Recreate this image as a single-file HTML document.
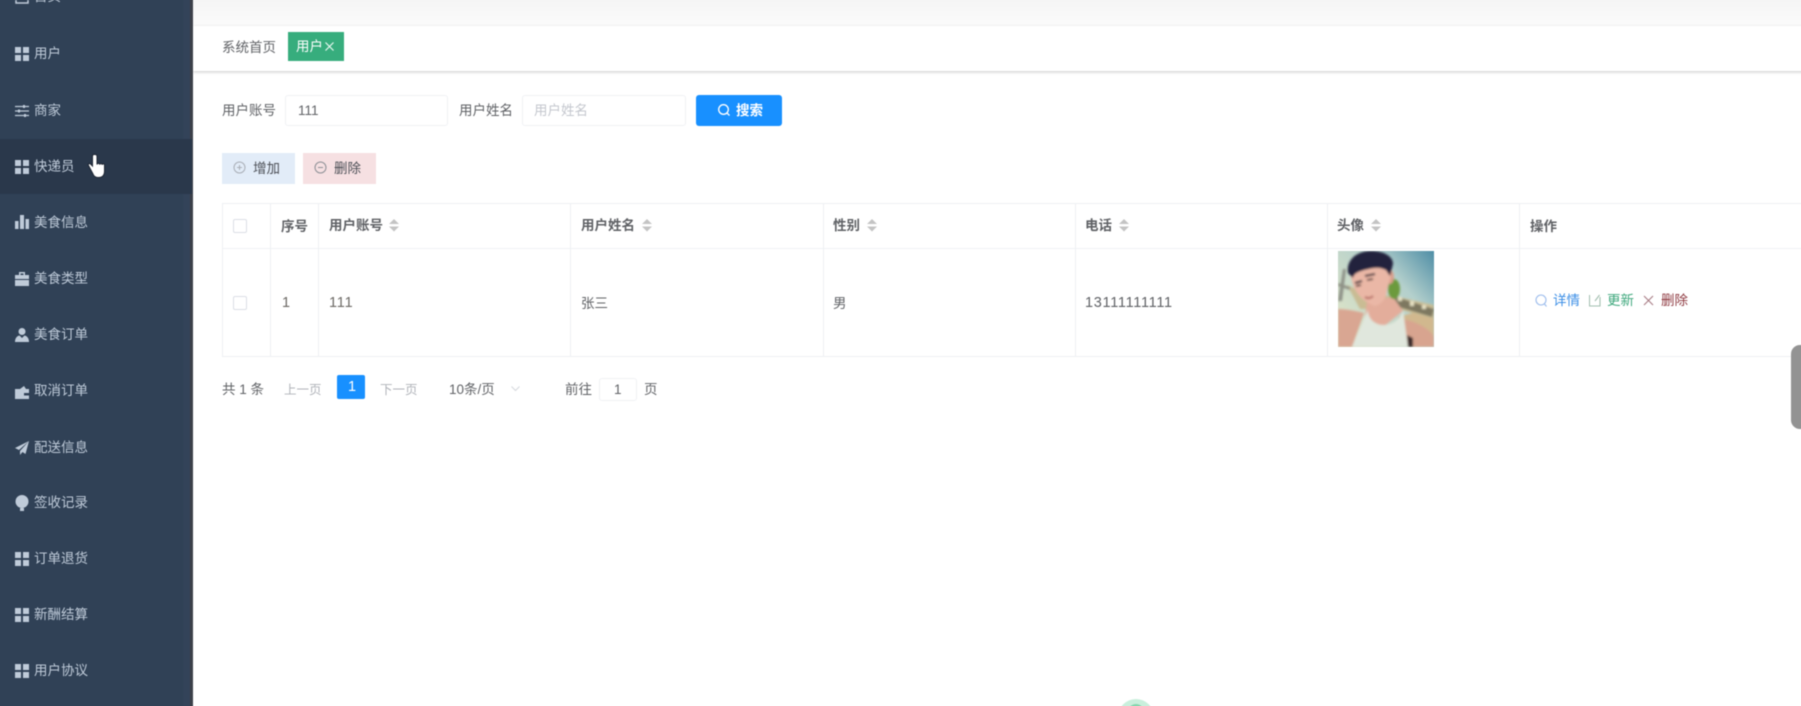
<!DOCTYPE html>
<html lang="zh"><head><meta charset="utf-8"><title>用户</title>
<style>
html,body{margin:0;padding:0;background:#fff}
#p{position:relative;width:1801px;height:706px;overflow:hidden;background:#fff}
#q{position:absolute;left:0;top:0;width:1801px;height:706px;font-family:"Liberation Sans","Noto Sans CJK SC",sans-serif;font-size:13.5px;color:#606266;filter:blur(.55px)}
#q div,#q span.a,#q svg.a{position:absolute}
.t{position:absolute;white-space:nowrap;line-height:20px;height:20px}
.m{color:#bfcbd9;left:34px}
.h{font-weight:700;color:#5f6165}
.i{position:absolute;left:15px;width:14px;height:14px}
.vl{position:absolute;width:1px;background:#eef0f3;top:203px;height:153px}
.cb{position:absolute;width:12px;height:12px;border:1px solid #dcdfe6;left:233px;background:#fff;border-radius:2px}
</style></head><body><div id="p"><div id="q">
<!-- top -->
<div style="left:193px;top:-5px;width:1618px;height:31px;background:linear-gradient(#f4f4f4,#fbfbfb)"></div>
<div style="left:193px;top:26px;width:1618px;height:45px;background:#fff;box-shadow:0 1px 3px rgba(0,0,0,.22)"></div>
<span class="t" style="left:222px;top:38px">系统首页</span>
<div style="left:288px;top:32px;width:56px;height:29px;background:#37ad7d"></div>
<span class="t" style="left:296px;top:37px;color:#fff">用户</span>
<svg class="a" style="left:324px;top:41px" width="11" height="11" viewBox="0 0 11 11"><path d="M1.500 1.500l8 8M9.500 1.500l-8 8" stroke="#e8f8f0" stroke-width="1.200" fill="none"/></svg>

<!-- sidebar -->
<div style="left:-6px;top:-6px;width:198px;height:718px;background:#304156"></div>
<div style="left:183px;top:-6px;width:7px;height:718px;background:#334359"></div>
<div style="left:190px;top:-6px;width:3px;height:718px;background:#3c4049"></div>
<div style="left:-6px;top:139px;width:198px;height:55px;background:#2a384b"></div>

<svg class="a" style="left:15px;top:0" width="14" height="4" viewBox="0 0 14 4"><path d="M1 0v3h12V0" stroke="#bfcbd9" stroke-width="1.500" fill="none"/></svg>
<span class="t m" style="top:-13px">首页</span>

<svg class="i" style="top:47px" viewBox="0 0 14 14"><path fill="#bfcbd9" d="M0 0h6v6H0zM8 0h6v6H8zM0 8h6v6H0zM8 8h6v6H8z"/></svg>
<span class="t m" style="top:44px">用户</span>

<svg class="i" style="top:104px" viewBox="0 0 14 14"><path stroke="#bfcbd9" stroke-width="1.300" fill="none" d="M0 2.500h14M0 7h14M0 11.500h14"/><path fill="#bfcbd9" d="M8 1h2v3H8zM3 5.500h2v3H3zM9 10h2v3H9z"/></svg>
<span class="t m" style="top:101px">商家</span>

<svg class="i" style="top:160px" viewBox="0 0 14 14"><path fill="#bfcbd9" d="M0 0h6v6H0zM8 0h6v6H8zM0 8h6v6H0zM8 8h6v6H8z"/></svg>
<span class="t m" style="top:157px">快递员</span>

<svg class="i" style="top:215px" viewBox="0 0 14 14"><path fill="#bfcbd9" d="M0 6h3.500v8H0zM5 0h4v14H5zM10.500 4H14v10h-3.500z"/></svg>
<span class="t m" style="top:213px">美食信息</span>

<svg class="i" style="top:272px" viewBox="0 0 14 14"><path fill="#bfcbd9" d="M4 0h6v3h4v4H0V3h4zM5.500 1.500V3h3V1.500zM0 8h14v6H0z"/></svg>
<span class="t m" style="top:269px">美食类型</span>

<svg class="i" style="top:328px" viewBox="0 0 14 14"><circle cx="7" cy="3.500" r="3.500" fill="#bfcbd9"/><path fill="#bfcbd9" d="M0 14c0-4 2-6 4.500-6.500L7 10l2.500-2.500C12 8 14 10 14 14z"/></svg>
<span class="t m" style="top:325px">美食订单</span>

<svg class="i" style="top:385px" viewBox="0 0 14 14"><path fill="#bfcbd9" d="M0 4h5l4-3 2 3h3v10H0zM9 8v2.500h5V8z"/></svg>
<span class="t m" style="top:381px">取消订单</span>

<svg class="i" style="top:441px" viewBox="0 0 14 14"><path fill="#bfcbd9" d="M14 0L0 7l4 2zM14 0L5 10v4l2.500-3 3 2z"/></svg>
<span class="t m" style="top:438px">配送信息</span>

<svg class="i" style="top:495px;height:16px" viewBox="0 0 14 16"><circle cx="7" cy="6.500" r="6.500" fill="#bfcbd9"/><path fill="#bfcbd9" d="M5 13h4v3H5z"/></svg>
<span class="t m" style="top:493px">签收记录</span>

<svg class="i" style="top:552px" viewBox="0 0 14 14"><path fill="#bfcbd9" d="M0 0h6v6H0zM8 0h6v6H8zM0 8h6v6H0zM8 8h6v6H8z"/></svg>
<span class="t m" style="top:549px">订单退货</span>

<svg class="i" style="top:608px" viewBox="0 0 14 14"><path fill="#bfcbd9" d="M0 0h6v6H0zM8 0h6v6H8zM0 8h6v6H0zM8 8h6v6H8z"/></svg>
<span class="t m" style="top:605px">新酬结算</span>

<svg class="i" style="top:664px" viewBox="0 0 14 14"><path fill="#bfcbd9" d="M0 0h6v6H0zM8 0h6v6H8zM0 8h6v6H0zM8 8h6v6H8z"/></svg>
<span class="t m" style="top:661px">用户协议</span>

<!-- cursor -->
<svg class="a" style="left:87px;top:153px" width="19" height="26" viewBox="0 0 19 26"><path d="M7 1.500c-1.200 0-1.500 1-1.500 2v9.500L3.500 11C2 10 .8 11 1.500 12.500L6 21c1 2.500 2.500 3.500 5.500 3.500 4 0 6-2.500 6-6.500v-6c0-1.500-2-1.500-2.300-.2 0-1.500-2.200-1.700-2.500-.2 0-1.500-2.300-1.700-2.700-.1V3.500c0-1-.7-2-1.800-2h-.7z" fill="#fff" stroke="#1c2431" stroke-width="1"/></svg>

<!-- search -->
<span class="t" style="left:222px;top:101px">用户账号</span>
<div style="left:285px;top:95px;width:161px;height:29px;border:1px solid #f0f1f4;border-radius:3px"></div>
<span class="t" style="left:298px;top:101px">111</span>
<span class="t" style="left:459px;top:101px">用户姓名</span>
<div style="left:522px;top:95px;width:162px;height:29px;border:1px solid #f0f1f4;border-radius:3px"></div>
<span class="t" style="left:534px;top:101px;color:#c4c7ce">用户姓名</span>
<div style="left:696px;top:95px;width:86px;height:31px;background:#1890ff;border-radius:3px"></div>
<svg class="a" style="left:717px;top:103px" width="14" height="14" viewBox="0 0 14 14"><circle cx="6.500" cy="6.500" r="4.800" stroke="#fff" stroke-width="1.300" fill="none"/><path d="M10 10l2.500 2.500" stroke="#fff" stroke-width="1.300"/></svg>
<span class="t" style="left:736px;top:101px;color:#fff;font-weight:700">搜索</span>

<!-- buttons -->
<div style="left:222px;top:153px;width:73px;height:31px;background:#e2ecf8"></div>
<svg class="a" style="left:233px;top:161px" width="13" height="13" viewBox="0 0 13 13"><circle cx="6.500" cy="6.500" r="5.500" stroke="#a9aeb6" fill="none"/><path d="M6.500 4v5M4 6.500h5" stroke="#a9aeb6"/></svg>
<span class="t" style="left:253px;top:159px;color:#4d5057">增加</span>
<div style="left:303px;top:153px;width:73px;height:31px;background:#f6e0e2"></div>
<svg class="a" style="left:314px;top:161px" width="13" height="13" viewBox="0 0 13 13"><circle cx="6.500" cy="6.500" r="5.500" stroke="#8c8f95" fill="none"/><path d="M4 6.500h5" stroke="#8c8f95"/></svg>
<span class="t" style="left:334px;top:159px;color:#4d5057">删除</span>

<!-- table -->
<div style="left:222px;top:203px;width:1589px;height:1px;background:#eef0f3"></div>
<div style="left:222px;top:248px;width:1589px;height:1px;background:#f0f2f5"></div>
<div style="left:222px;top:356px;width:1589px;height:1px;background:#eef0f3"></div>
<div class="vl" style="left:222px"></div><div class="vl" style="left:270px"></div><div class="vl" style="left:318px"></div><div class="vl" style="left:570px"></div><div class="vl" style="left:823px"></div><div class="vl" style="left:1075px"></div><div class="vl" style="left:1327px"></div><div class="vl" style="left:1519px"></div>
<div class="cb" style="top:219px"></div><div class="cb" style="top:296px"></div>
<span class="t h" style="left:281px;top:217px">序号</span>
<span class="t h" style="left:329px;top:215.500px">用户账号</span>
<span class="t h" style="left:581px;top:215.500px">用户姓名</span>
<span class="t h" style="left:833px;top:215.500px">性别</span>
<span class="t h" style="left:1085px;top:215.500px">电话</span>
<span class="t h" style="left:1337px;top:215.500px">头像</span>
<span class="t h" style="left:1530px;top:217px">操作</span>
<svg class="a" style="left:389px;top:219px" width="10" height="13" viewBox="0 0 10 13"><path d="M5 0l5 5H0zM0 7.500h10L5 12.500z" fill="#c4c4c4"/></svg>
<svg class="a" style="left:642px;top:219px" width="10" height="13" viewBox="0 0 10 13"><path d="M5 0l5 5H0zM0 7.500h10L5 12.500z" fill="#c4c4c4"/></svg>
<svg class="a" style="left:867px;top:219px" width="10" height="13" viewBox="0 0 10 13"><path d="M5 0l5 5H0zM0 7.500h10L5 12.500z" fill="#c4c4c4"/></svg>
<svg class="a" style="left:1119px;top:219px" width="10" height="13" viewBox="0 0 10 13"><path d="M5 0l5 5H0zM0 7.500h10L5 12.500z" fill="#c4c4c4"/></svg>
<svg class="a" style="left:1371px;top:219px" width="10" height="13" viewBox="0 0 10 13"><path d="M5 0l5 5H0zM0 7.500h10L5 12.500z" fill="#c4c4c4"/></svg>

<span class="t" style="left:282px;top:293px;letter-spacing:1px;color:#6d6a66;font-size:14.500px">1</span>
<span class="t" style="left:329px;top:293px;letter-spacing:.8px;color:#6d6a66;font-size:14.500px">111</span>
<span class="t" style="left:581px;top:294px">张三</span>
<span class="t" style="left:833px;top:294px">男</span>
<span class="t" style="left:1085px;top:293px;letter-spacing:.7px;font-size:14.500px">13111111111</span>

<!-- avatar -->
<svg class="a" style="left:1338px;top:251px" width="96" height="96" viewBox="0 0 96 96">
<defs><linearGradient id="s" x1="1" y1="0" x2=".1" y2=".8"><stop offset="0" stop-color="#4f8ea6"/><stop offset=".4" stop-color="#b4d0cc"/><stop offset="1" stop-color="#dbe3c8"/></linearGradient><filter id="b"><feGaussianBlur stdDeviation="1"/></filter></defs>
<rect width="96" height="96" fill="url(#s)"/>
<g filter="url(#b)">
<path d="M60 66l36-10v40H70z" fill="#d1b88e"/>
<path d="M9 34l18 8 33 4 36 8v14L60 58 22 58z" fill="#c9bc94"/>
<path d="M52 44l44 14-2 8-40-12z" fill="#7e7860"/>
<path d="M60 46h4v4h-4zM72 50h4v5h-4zM84 54h4v4h-4z" fill="#e8e2c4"/>
<path d="M5 18h3L4 50H0z" fill="#8d9187"/>
<path d="M0 32l12 4v3L0 35z" fill="#8f9185"/>
<path d="M0 58c8 0 18 2 26 4L14 96H0z" fill="#d9a692"/>
<path d="M64 68c14 2 28 10 32 18v10H66z" fill="#d8a48f"/>
<path d="M29 50l26-4 10 14-20 16-18-10z" fill="#e3ad9b"/>
<path d="M30 59c0 8 6 15 15 15 10 0 18-6 20-15l5 37H14z" fill="#e0e7dd"/>
<ellipse cx="56" cy="38" rx="6" ry="10" fill="#6c9a3c"/>
<ellipse cx="52" cy="26" rx="4" ry="7" fill="#d99f8b"/>
<path d="M12 20c2 14 6 28 25 35 8-2 12-10 12-16l4-14-6-12-20-2z" fill="#eab7a6"/>
<path d="M10 22C8 8 20-1 36 0c12 1 19 6 19 13l-3 12-4-6c-8-4-14-2-22 0-6 2-10 3-11 8z" fill="#20243d"/>
<path d="M17 32l7-2M27 25l10-2" stroke="#2a2430" stroke-width="2"/>
<path d="M18 35l5-1M29 29l6-1" stroke="#4a3436" stroke-width="1.800"/>
<path d="M27 46c3 2 6 1 8-1" stroke="#b66a64" stroke-width="2" fill="none"/>
<path d="M69 84l6 3v9h-5z" fill="#3a2c2a"/>
</g></svg>

<!-- ops -->
<svg class="a" style="left:1535px;top:294px" width="13" height="14" viewBox="0 0 13 14"><circle cx="6" cy="6" r="5" stroke="#9cbcec" stroke-width="1.100" fill="none"/><path d="M9.500 10l2 2.500" stroke="#9cbcec" stroke-width="1.100"/></svg>
<span class="t" style="left:1553px;top:291px;color:#3d8fe6">详情</span>
<svg class="a" style="left:1589px;top:294px" width="12" height="13" viewBox="0 0 12 13"><path d="M.5 1v11h10.500V3M6 7l4.500-6" stroke="#a3bfb0" stroke-width="1.100" fill="none"/></svg>
<span class="t" style="left:1607px;top:291px;color:#3fa87d">更新</span>
<svg class="a" style="left:1643px;top:295px" width="11" height="11" viewBox="0 0 11 11"><path d="M1 1l9 9M10 1l-9 9" stroke="#a87c84" stroke-width="1.100"/></svg>
<span class="t" style="left:1661px;top:291px;color:#8f3b42">删除</span>

<!-- pagination -->
<span class="t" style="left:222px;top:380px">共 1 条</span>
<span class="t" style="left:284px;top:380px;color:#b0b3b9;font-size:12.500px">上一页</span>
<div style="left:337px;top:375px;width:28px;height:24px;background:#1890ff;border-radius:2px"></div>
<span class="t" style="left:348px;top:377px;color:#fff;font-size:14.500px">1</span>
<span class="t" style="left:380px;top:380px;color:#b0b3b9;font-size:12.500px">下一页</span>
<span class="t" style="left:449px;top:380px">10条/页</span>
<svg class="a" style="left:511px;top:386px" width="9" height="6" viewBox="0 0 9 6"><path d="M.5 .5l4 4 4-4" stroke="#d5d8dd" fill="none"/></svg>
<span class="t" style="left:565px;top:380px">前往</span>
<div style="left:599px;top:378px;width:36px;height:21px;border:1px solid #f0f1f4;border-radius:3px"></div>
<span class="t" style="left:614px;top:380px">1</span>
<span class="t" style="left:644px;top:380px">页</span>

<!-- scrollbar -->
<div style="left:1791px;top:345px;width:16px;height:84px;background:#939393;border-radius:9px 0 0 9px"></div>
<!-- bottom circle -->
<div style="left:1118px;top:699px;width:36px;height:36px;border-radius:50%;background:#c9efdc"></div>
<div style="left:1128px;top:704px;width:16px;height:16px;border-radius:50%;background:#86d6ae"></div>
</div></div></body></html>
